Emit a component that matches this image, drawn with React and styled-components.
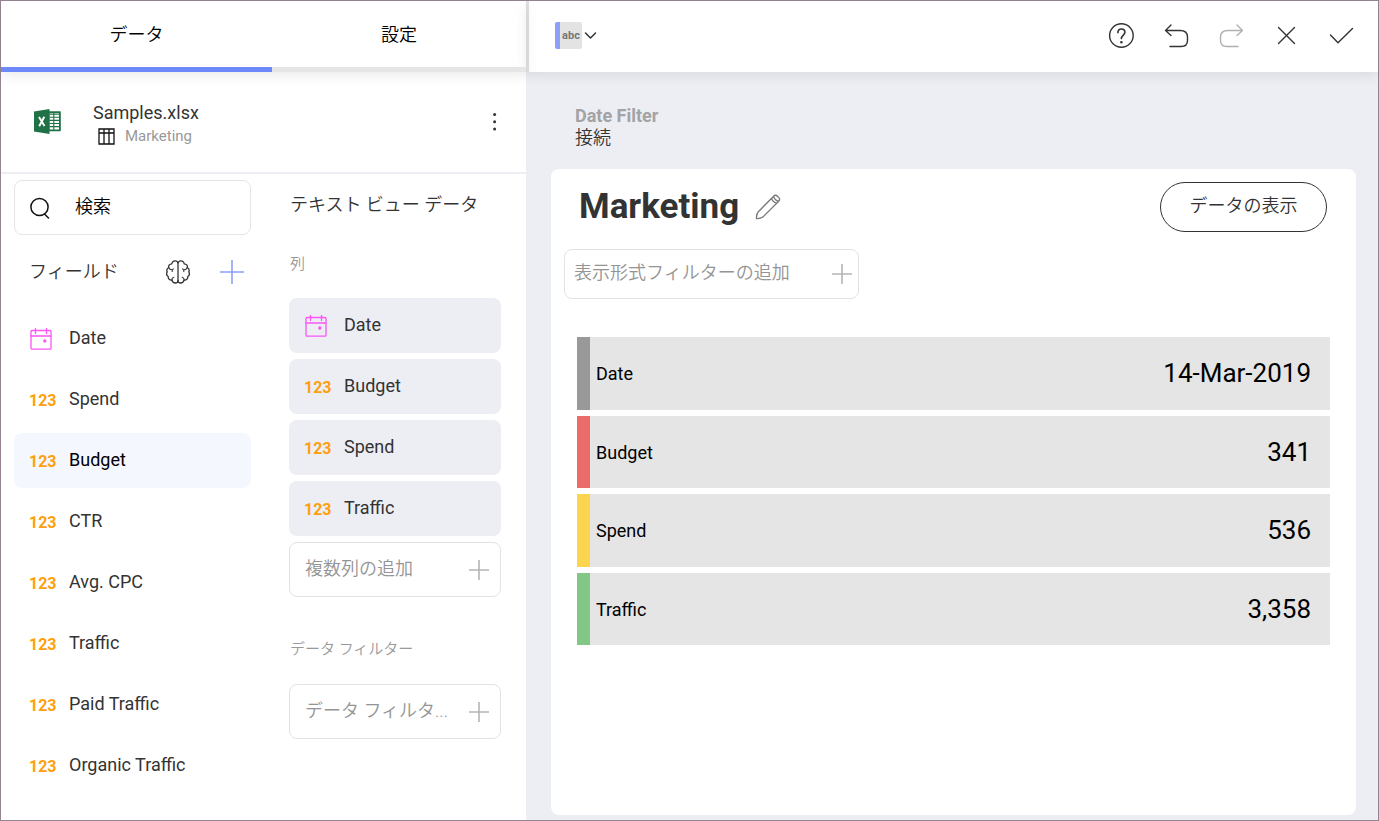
import React from "react";
import styled, { createGlobalStyle } from "styled-components";

const GlobalStyle = createGlobalStyle`
  *, *::before, *::after { box-sizing: border-box; }
  body {
    margin: 0;
    background: #edeef4;
    color: #333333;
    font-family: Roboto, "Noto Sans CJK JP", sans-serif;
    font-size: 18px;
    line-height: 24px;
  }
  button, input {
    font: inherit;
    color: inherit;
    margin: 0;
    padding: 0;
    border: 0;
    background: none;
  }
  button { cursor: pointer; }
  svg { display: block; flex: none; }
`;

const Frame = styled.div`
  display: flex;
  min-height: 100vh;
  border: 1px solid #978492;
`;

const Sidebar = styled.aside`
  flex: none;
  width: 525px;
  background: #ffffff;
`;

const Tabs = styled.div`
  position: relative;
  display: flex;
  height: 71px;
  box-shadow: 0 4px 12px rgba(0, 0, 0, 0.08);
`;

const Tab = styled.button`
  flex: ${(p) => (p.$active ? "none" : "1")};
  width: ${(p) => (p.$active ? "271px" : "auto")};
  padding-top: 2px;
  border-bottom: 5px solid ${(p) => (p.$active ? "#6d88f8" : "#e5e5e5")};
  color: #000000;
  font-weight: 350;
`;

const Source = styled.section`
  display: flex;
  align-items: center;
  height: 102px;
  padding: 0 20px 0 33px;
  border-bottom: 2px solid #edeef4;
`;

const SourceText = styled.div`
  flex: 1;
  margin-left: 32px;
  padding-top: 6px;
`;

const SourceName = styled.div`
  line-height: 22px;
`;

const SourceSheet = styled.div`
  display: flex;
  align-items: center;
  gap: 10px;
  padding-left: 5px;
  color: #999999;
  font-size: 15px;
`;

const IconButton = styled.button`
  display: grid;
  place-items: center;
  flex: none;
  width: ${(p) => p.$size || 26}px;
  height: ${(p) => p.$size || 26}px;
`;

const Columns = styled.div`
  display: flex;
  align-items: flex-start;
  gap: 38px;
  padding: 6px 25px 0 13px;
`;

const FieldsColumn = styled.section`
  flex: none;
  width: 237px;
`;

const DataColumn = styled.section`
  flex: 1;
  min-width: 0;
`;

const SearchBox = styled.label`
  display: flex;
  align-items: center;
  gap: 25px;
  height: 55px;
  padding: 0 15px;
  border: 1px solid #e5e5e5;
  border-radius: 8px;
  color: #000000;
`;

const SearchInput = styled.input`
  flex: 1;
  min-width: 0;
  height: 32px;
  margin-bottom: 2px;
  outline: 0;
  font-weight: 350;
  &::placeholder { color: #000000; opacity: 1; }
`;

const FieldsHeader = styled.div`
  display: flex;
  align-items: center;
  gap: 30px;
  height: 55px;
  margin: 9px 0 12px;
  padding: 0 7px 0 15px;
`;

const SectionTitle = styled.h2`
  flex: 1;
  margin: 0;
  font-size: 18px;
  font-weight: 350;
`;

const List = styled.ul`
  display: grid;
  gap: 6px;
  margin: 0;
  padding: 0;
  list-style: none;
`;

const FieldButton = styled.button`
  display: flex;
  align-items: center;
  gap: 14px;
  width: 100%;
  height: 55px;
  padding: 0 14px 2px;
  border-radius: 8px;
  text-align: left;
  background: ${(p) => (p.$chip ? "#edeef4" : p.$active ? "#f4f7fe" : "transparent")};
  color: ${(p) => (p.$active ? "#000000" : "#333333")};
`;

const FieldType = styled.span`
  flex: none;
  display: grid;
  place-items: center;
  width: 27px;
  padding: ${(p) => (p.$date ? "3px 2px 0 0" : "4px 0 0 1px")};
  color: ${(p) => (p.$date ? "#fb55f6" : "#ff9f0f")};
  font-size: 16px;
  font-weight: 700;
`;

const DataTitle = styled(SectionTitle)`
  padding: 13px 1px 0;
`;

const GroupLabel = styled.h3`
  margin: 0;
  padding: ${(p) => (p.$first ? "35px 0 22px" : "40px 0 23px")};
  padding-left: 1px;
  color: #999999;
  font-size: 15px;
  font-weight: 350;
`;

const AddButton = styled.button`
  display: flex;
  align-items: center;
  justify-content: space-between;
  width: ${(p) => (p.$wide ? "295px" : "100%")};
  height: ${(p) => (p.$wide ? "50px" : "55px")};
  padding: ${(p) => (p.$wide ? "0 6px 0 9px" : "0 11px 0 15px")};
  border: 1px solid #e3e3e3;
  border-radius: 8px;
  color: #949494;
  font-weight: 350;
`;

const AddText = styled.span`
  padding-bottom: 2px;
  white-space: nowrap;
`;

const Main = styled.main`
  flex: 1;
  min-width: 0;
  display: flex;
  flex-direction: column;
`;

const Toolbar = styled.header`
  display: flex;
  align-items: center;
  justify-content: space-between;
  height: 71px;
  padding: 0 24px 2px 26px;
  border-left: 3px solid #e0e0e0;
  background: #ffffff;
  box-shadow: 0 4px 12px rgba(0, 0, 0, 0.08);
`;

const ChartPicker = styled.button`
  display: flex;
  align-items: center;
  gap: 2px;
`;

const ChartBadge = styled.span`
  display: grid;
  place-items: center;
  width: 27px;
  height: 27px;
  border-left: 5px solid #8c9ff9;
  border-radius: 2px;
  background: #e3e3e3;
  color: #777777;
  font-size: 11px;
  font-weight: 700;
  line-height: 16px;
`;

const Actions = styled.div`
  display: flex;
  align-items: center;
  gap: 29px;
`;

const FilterSummary = styled.section`
  padding: 33px 49px 20px;
  line-height: 22px;
`;

const FilterName = styled.div`
  color: #a3a3a6;
  font-weight: 700;
`;

const FilterValue = styled.div`
  font-weight: 350;
`;

const Card = styled.section`
  flex: 1;
  margin: 0 22px 5px 25px;
  padding: 13px 26px 24px 13px;
  border-radius: 8px;
  background: #ffffff;
`;

const CardHeader = styled.div`
  display: flex;
  align-items: center;
  gap: 16px;
  height: 50px;
  padding: 0 3px 0 15px;
`;

const CardTitle = styled.h1`
  margin: 0;
  font-size: 35px;
  font-weight: 700;
  line-height: 48px;
`;

const ShowDataButton = styled.button`
  width: 167px;
  height: 50px;
  margin-left: auto;
  padding-bottom: 2px;
  border: 1px solid #333333;
  border-radius: 25px;
  font-weight: 350;
`;

const FilterRow = styled.div`
  padding: 17px 0 32px;
`;

const TableWrap = styled.div`
  padding-left: 13px;
`;

const RecordTable = styled.table`
  width: 100%;
  height: 320px;
  border-collapse: separate;
  border-spacing: 0 6px;
  color: #000000;
`;

const RecordName = styled.th`
  padding: 2px 6px 0;
  border-left: 13px solid ${(p) => p.$color};
  background: #e5e5e5;
  font-weight: 400;
  text-align: left;
`;

const RecordValue = styled.td`
  padding: 0 19px;
  background: #e5e5e5;
  font-size: 26px;
  text-align: right;
`;

const Stroke = ({ w, h, color = "#333333", width = 1.3, children, viewBox }) => (
  <svg
    width={w}
    height={h}
    viewBox={viewBox || `0 0 ${w} ${h}`}
    fill="none"
    stroke={color}
    strokeWidth={width}
    strokeLinecap="round"
    strokeLinejoin="round"
    aria-hidden="true"
  >
    {children}
  </svg>
);

const ExcelIcon = () => (
  <svg width="27" height="26" viewBox="0 0 27 26" aria-hidden="true">
    <path d="M15 2.300H26.200Q26.800 2.300 26.800 3V21.600Q26.800 22.300 26.200 22.300H15Z" fill="#1f7246" />
    <path d="M15.500 4.300H25V20.500H15.500Z" fill="#ffffff" />
    <path
      d="M15.500 5.200H25M15.500 8.300H25M15.500 11.400H25M15.500 14.500H25M15.500 17.600H25M19.800 4V21"
      stroke="#1f7246"
      strokeWidth="1.1"
    />
    <path d="M0 2.400 15.500 0V25L0 22.600Z" fill="#1f7246" />
    <path d="M5 8 10.500 17M10.300 7.800 5.200 17.200" stroke="#ffffff" strokeWidth="1.9" />
  </svg>
);

const SheetIcon = () => (
  <Stroke w={17} h={17} color="#111111" width={1.3}>
    <path d="M1 1H16V16H1ZM1 5H16M6 1V16M11 1V16" strokeLinejoin="miter" />
  </Stroke>
);

const MoreIcon = () => (
  <svg width="4" height="20" viewBox="0 0 4 20" fill="#333333" aria-hidden="true">
    <circle cx="1.600" cy="2.500" r="1.500" />
    <circle cx="1.600" cy="9.800" r="1.500" />
    <circle cx="1.600" cy="17.100" r="1.500" />
  </svg>
);

const SearchIcon = () => (
  <Stroke w={20} h={22} color="#111111" width={1.5}>
    <circle cx="9.500" cy="10" r="8.600" />
    <path d="M14.500 17 18.500 21" />
  </Stroke>
);

const BrainIcon = () => (
  <Stroke w={24} h={24} width={1.3}>
    <path d="M12 3C11.500 1.200 9.500.500 7.900 1.100 6.500 1.600 5.900 2.700 5.800 3.800 3.600 3.900 2.300 5.500 2.700 7.500 1 8.500.400 10.200 1.200 11.900.300 13.500.700 15.500 2.200 16.500 2 18.700 3.700 20.300 5.900 20 6.400 21.900 7.800 23 9.400 23 11 23 12 22 12 20.500V3" />
    <path d="M12 3C12.500 1.200 14.500.500 16.100 1.100 17.500 1.600 18.100 2.700 18.200 3.800 20.400 3.900 21.700 5.500 21.300 7.500 23 8.500 23.600 10.200 22.800 11.900 23.700 13.500 23.300 15.500 21.800 16.500 22 18.700 20.300 20.300 18.100 20 17.600 21.900 16.200 23 14.600 23 13 23 12 22 12 20.500" />
    <path d="M2.700 7.500C3.300 9 4.500 9.900 6.200 9.800L7.400 8.800M6.200 9.800V11.400M5.900 20C5.800 18.700 6.500 17.600 7.800 17.200M21.300 7.500C20.700 9 19.500 9.900 17.800 9.800L16.600 8.800M17.800 9.800V11.400M18.100 20C18.200 18.700 17.500 17.600 16.200 17.200" strokeWidth="1.100" />
  </Stroke>
);

const PlusIcon = ({ size = 20, color = "#b5b5b5", width = 1.6 }) => (
  <Stroke w={size} h={size} viewBox="0 0 20 20" color={color} width={width}>
    <path d="M10 0V20M0 10H20" strokeLinecap="butt" />
  </Stroke>
);

const CalendarIcon = () => (
  <Stroke w={22} h={22} color="currentColor" width={1.3}>
    <rect x="1" y="2.500" width="20" height="18.700" rx="1" />
    <path d="M1 8H21M5.500.5V5.500M16.500.5V5.500" />
    <circle cx="14.800" cy="13" r="1" fill="currentColor" />
  </Stroke>
);

const HelpIcon = () => (
  <Stroke w={26} h={26} width={1.4}>
    <circle cx="13.400" cy="12.500" r="11.800" />
    <path d="M9.900 9.600C10 7.300 11.400 6 13.400 6 15.500 6 16.900 7.400 16.900 9.300 16.900 12 13.400 12.200 13.400 15.600" strokeWidth="1.600" />
    <circle cx="13.400" cy="19.200" r=".6" fill="#333333" />
  </Stroke>
);

const UndoIcon = ({ color = "#333333", flip }) => (
  <Stroke w={26} h={26} color={color} width={1.4}>
    <g transform={flip ? "translate(27 0) scale(-1 1)" : undefined}>
      <path d="M2.500 7.500H17Q24.500 7.500 24.500 14V17.500Q24.500 23.500 18 23.500H7M8 2 2.500 7.500 8 12.500" />
    </g>
  </Stroke>
);

const CloseIcon = () => (
  <Stroke w={26} h={26} width={1.4}>
    <path d="M5.500 4.500 21.500 20.500M21.500 4.500 5.500 20.500" />
  </Stroke>
);

const CheckIcon = () => (
  <Stroke w={26} h={26} width={1.4}>
    <path d="M2.500 12 10 19.800 24.500 5.500" />
  </Stroke>
);

const ChevronIcon = () => (
  <Stroke w={13} h={8} width={1.5}>
    <path d="M1.500 1 6.500 6 11.500 1" />
  </Stroke>
);

const PencilIcon = () => (
  <Stroke w={26} h={26} color="#777777" width={1.3}>
    <path d="M1.500 24.500C1.300 21.500 2 19 3.600 17.500L18.600 2.200Q20.500.4 22.500 2.200L23.700 3.400Q25.500 5.300 23.700 7.300L8.500 22.400C6.500 24 4.500 24.700 1.500 24.500ZM16.600 4.200Q17.500 8.500 21.800 9.200M18.600 2.200Q19.500 6.500 23.700 7.300" />
  </Stroke>
);

const FieldItem = ({ name, date, active, chip }) => (
  <li>
    <FieldButton type="button" $active={active} $chip={chip}>
      <FieldType $date={date}>{date ? <CalendarIcon /> : "123"}</FieldType>
      {name}
    </FieldButton>
  </li>
);

const fields = ["Date", "Spend", "Budget", "CTR", "Avg. CPC", "Traffic", "Paid Traffic", "Organic Traffic"];
const columns = ["Date", "Budget", "Spend", "Traffic"];
const records = [
  { name: "Date", value: "14-Mar-2019", color: "#999999" },
  { name: "Budget", value: "341", color: "#ec6b6b" },
  { name: "Spend", value: "536", color: "#fdd450" },
  { name: "Traffic", value: "3,358", color: "#82c785" },
];

export default function App() {
  return (
    <>
      <GlobalStyle />
      <Frame lang="ja">
        <Sidebar>
          <Tabs role="tablist">
            <Tab type="button" role="tab" aria-selected="true" $active>データ</Tab>
            <Tab type="button" role="tab" aria-selected="false">設定</Tab>
          </Tabs>
          <Source>
            <ExcelIcon />
            <SourceText>
              <SourceName>Samples.xlsx</SourceName>
              <SourceSheet>
                <SheetIcon />
                Marketing
              </SourceSheet>
            </SourceText>
            <IconButton type="button" $size={22} aria-label="メニュー"><MoreIcon /></IconButton>
          </Source>
          <Columns>
            <FieldsColumn>
              <SearchBox>
                <SearchIcon />
                <SearchInput type="text" placeholder="検索" aria-label="検索" />
              </SearchBox>
              <FieldsHeader>
                <SectionTitle>フィールド</SectionTitle>
                <IconButton type="button" $size={24} aria-label="分析"><BrainIcon /></IconButton>
                <IconButton type="button" $size={24} aria-label="追加">
                  <PlusIcon size={24} color="#8c9ff9" width={1.3} />
                </IconButton>
              </FieldsHeader>
              <List>
                {fields.map((name) => (
                  <FieldItem key={name} name={name} date={name === "Date"} active={name === "Budget"} />
                ))}
              </List>
            </FieldsColumn>
            <DataColumn>
              <DataTitle>テキスト ビュー データ</DataTitle>
              <GroupLabel $first>列</GroupLabel>
              <List>
                {columns.map((name) => (
                  <FieldItem key={name} name={name} date={name === "Date"} chip />
                ))}
                <li>
                  <AddButton type="button">
                    <AddText>複数列の追加</AddText>
                    <PlusIcon />
                  </AddButton>
                </li>
              </List>
              <GroupLabel>データ フィルター</GroupLabel>
              <AddButton type="button">
                <AddText>データ フィルタ...</AddText>
                <PlusIcon />
              </AddButton>
            </DataColumn>
          </Columns>
        </Sidebar>
        <Main>
          <Toolbar>
            <ChartPicker type="button">
              <ChartBadge>abc</ChartBadge>
              <ChevronIcon />
            </ChartPicker>
            <Actions>
              <IconButton type="button" aria-label="ヘルプ"><HelpIcon /></IconButton>
              <IconButton type="button" aria-label="元に戻す"><UndoIcon /></IconButton>
              <IconButton type="button" aria-label="やり直し"><UndoIcon color="#b0b0b0" flip /></IconButton>
              <IconButton type="button" aria-label="閉じる"><CloseIcon /></IconButton>
              <IconButton type="button" aria-label="完了"><CheckIcon /></IconButton>
            </Actions>
          </Toolbar>
          <FilterSummary>
            <FilterName>Date Filter</FilterName>
            <FilterValue>接続</FilterValue>
          </FilterSummary>
          <Card>
            <CardHeader>
              <CardTitle>Marketing</CardTitle>
              <IconButton type="button" aria-label="編集"><PencilIcon /></IconButton>
              <ShowDataButton type="button">データの表示</ShowDataButton>
            </CardHeader>
            <FilterRow>
              <AddButton type="button" $wide>
                <AddText>表示形式フィルターの追加</AddText>
                <PlusIcon />
              </AddButton>
            </FilterRow>
            <TableWrap>
              <RecordTable>
                <tbody>
                  {records.map((r) => (
                    <tr key={r.name}>
                      <RecordName scope="row" $color={r.color}>{r.name}</RecordName>
                      <RecordValue>{r.value}</RecordValue>
                    </tr>
                  ))}
                </tbody>
              </RecordTable>
            </TableWrap>
          </Card>
        </Main>
      </Frame>
    </>
  );
}
